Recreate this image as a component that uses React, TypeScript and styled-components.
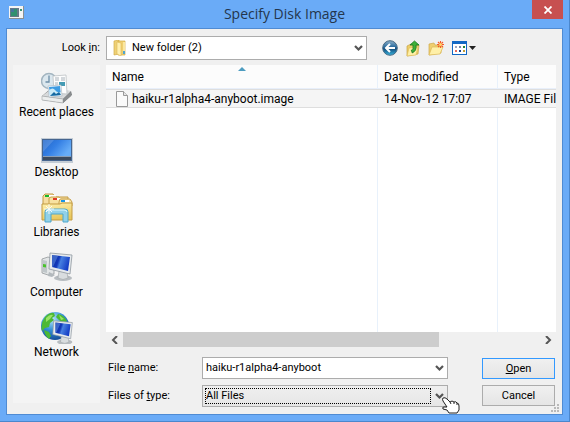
import React from "react";
import styled, { createGlobalStyle } from "styled-components";

const GlobalStyle = createGlobalStyle`
  * { box-sizing: border-box; }
  body { margin: 0; background: #6aabf7; }
  button, input, select { font: inherit; color: inherit; }
`;

const Window = styled.div`
  display: flex;
  flex-direction: column;
  height: 100vh;
  min-height: 380px;
  padding: 0 6px 6px;
  border: solid #4b87cd;
  border-width: 0 1px 1px 0;
  background: #6aabf7;
  color: #000;
  font: 12px/16px Roboto, "Open Sans", sans-serif;
`;

const TitleBar = styled.header`
  display: grid;
  grid-template-columns: 31px 1fr 31px;
  height: 28px;
  flex: none;
`;

const AppIcon = styled.svg`
  margin: 6px 0 0 3px;
`;

const Title = styled.h1`
  margin: 0;
  color: #24364c;
  font-family: "Open Sans", sans-serif;
  font-size: 14px;
  font-weight: 400;
  line-height: 28px;
  text-align: center;
`;

const CloseButton = styled.button`
  display: flex;
  align-items: center;
  justify-content: center;
  height: 19px;
  padding: 0;
  border: 0;
  background: #c75050;
`;

const Client = styled.main`
  position: relative;
  flex: 1;
  min-height: 0;
  display: grid;
  grid-template: 24px minmax(0, 1fr) / 87px minmax(0, 1fr);
  gap: 5px 6px;
  padding: 7px 6px;
  border: 1px solid #4f8bd3;
  background: #f0f0f0;
`;

const LookLabel = styled.label`
  align-self: center;
  text-align: right;
  font-size: 11px;
`;

const TopRow = styled.div`
  display: flex;
  align-items: center;
  gap: 15px;
  padding-right: 80px;
`;

const ToolBar = styled.div`
  display: flex;
  align-items: center;
  gap: 7px;
`;

const ToolButton = styled.button`
  display: flex;
  padding: 0;
  border: 0;
  background: none;
`;

const Combo = styled.div<{ $tone?: "plain" | "grey" }>`
  position: relative;
  display: flex;
  align-items: center;
  flex: 1;
  min-width: 0;
  height: ${(p) => (p.$tone ? "22px" : "24px")};
  border: 1px solid #acacac;
  background: ${(p) => (p.$tone === "grey" ? "linear-gradient(#efefef, #e6e6e6)" : "#fff")};
  font-size: 11px;
`;

const ComboIcon = styled.svg`
  flex: none;
  margin: 0 4px 0 5px;
`;

const ComboSelect = styled.select<{ $focused?: boolean }>`
  appearance: none;
  flex: 1;
  min-width: 0;
  height: 16px;
  margin: 0 1px 0 ${(p) => (p.$focused ? "2px" : "0")};
  padding: 0;
  border: ${(p) => (p.$focused ? "1px dotted #000" : "0")};
  border-radius: 0;
  background: none;
  line-height: 14px;
  outline: 0;
`;

const ComboInput = styled.input`
  flex: 1;
  min-width: 0;
  padding: 0 0 0 3px;
  border: 0;
  background: none;
  outline: 0;
`;

const ComboArrow = styled.span`
  display: flex;
  justify-content: center;
  flex: none;
  width: 15px;
`;

const Pointer = styled.svg`
  position: absolute;
  right: -13px;
  top: 11px;
  z-index: 1;
  pointer-events: none;
`;

const Places = styled.nav`
  display: flex;
  flex-direction: column;
  gap: 12px;
  margin-bottom: 4px;
  padding-top: 7px;
  background: #f4f4f4;
`;

const Place = styled.a`
  display: flex;
  flex-direction: column;
  align-items: center;
  color: #000;
  text-decoration: none;
  white-space: nowrap;
`;

const Content = styled.div`
  display: flex;
  flex-direction: column;
  min-height: 0;
`;

const FileList = styled.div`
  flex: 1;
  min-height: 0;
  overflow: hidden;
  background: #fff;
`;

const Table = styled.table`
  width: 100%;
  height: 100%;
  table-layout: fixed;
  border-collapse: separate;
  border-spacing: 0;
`;

const Head = styled.th`
  position: relative;
  height: 24px;
  padding: 0 6px;
  border-right: 1px solid #e8f1fb;
  border-bottom: 1px solid #e8effa;
  background: #fcfcfc;
  font-weight: 400;
  text-align: left;
  &:last-child { border-right: 0; }
`;

const SortMark = styled.svg`
  position: absolute;
  top: 1px;
  right: 131px;
`;

const Cell = styled.td`
  height: 19px;
  padding: 0 0 0 6px;
  border: solid #dedede;
  border-width: 1px 0;
  background: #f5f5f5;
  overflow: hidden;
  white-space: nowrap;
`;

const FileName = styled.span`
  display: flex;
  align-items: center;
  gap: 2px;
  height: 17px;
  margin-left: 1px;
`;

const Blank = styled.td`
  padding: 0;
  border-right: 1px solid #e8f1fb;
  &:last-child { border-right: 0; }
`;

const ScrollBar = styled.div`
  display: flex;
  height: 15px;
  flex: none;
`;

const ScrollButton = styled.button`
  display: flex;
  align-items: center;
  justify-content: center;
  width: 17px;
  padding: 0;
  border: 0;
  background: none;
`;

const Track = styled.div`
  flex: 1;
`;

const Thumb = styled.div`
  width: 76%;
  height: 100%;
  background: #cdcdcd;
`;

const Fields = styled.form`
  display: grid;
  grid-template-columns: 96px minmax(0, 1fr) 73px;
  row-gap: 6px;
  padding: 10px 1px 0 0;
`;

const FieldLabel = styled.label`
  align-self: center;
  padding-left: 2px;
  font-size: 11px;
`;

const FieldBox = styled.div`
  display: flex;
  padding-right: 34px;
`;

const Button = styled.button<{ $primary?: boolean }>`
  align-self: ${(p) => (p.$primary ? "end" : "start")};
  height: 21px;
  padding: 0;
  border: 1px solid ${(p) => (p.$primary ? "#3399ff" : "#acacac")};
  background: linear-gradient(#f0f0f0, #e5e5e5);
  font-size: 11px;
  line-height: 18px;
`;

const Grip = styled.svg`
  position: absolute;
  right: 2px;
  bottom: 1px;
`;

const Chevron = () => (
  <svg width="9" height="7" viewBox="0 0 9 7" aria-hidden="true">
    <path d="M1 1l3.500 3.500L8 1" fill="none" stroke="#555" strokeWidth="2.200" />
  </svg>
);

const SideArrow = ({ d }: { d: string }) => (
  <svg width="8" height="8" viewBox="0 0 8 8" aria-hidden="true">
    <path d={d} fill="none" stroke="#555" strokeWidth="2" />
  </svg>
);

const RecentIcon = () => (
  <svg width="32" height="32" viewBox="0 0 32 32" aria-hidden="true">
    <circle cx="8" cy="9" r="7.500" fill="#dbe7ee" stroke="#a3b5c0" strokeWidth="1.500" />
    <path d="M8 3.500V10H4.500" fill="none" stroke="#6e8fa8" strokeWidth="1.300" />
    <path d="M1 24L8 18l22 1 1 4-9 8L1 28z" fill="#777b7d" />
    <path d="M1 24L9 18l21 1-8 8z" fill="#d8dadb" />
    <path d="M1 24l21 3v4L1 28z" fill="#eceeee" stroke="#a1a4a6" strokeWidth=".600" />
    <path d="M22 27l8-7v4l-8 7z" fill="#898c8e" />
    <path d="M12 4l13-1 1 19-13-1z" fill="#fdfdfd" stroke="#b4babd" strokeWidth=".700" />
    <path d="M14 6h4M14 8h4M20 6h4M20 8h4M14 11h3M14 13h3" stroke="#a9b2ba" />
    <path d="M18 10h6v4h-6z" fill="#459bb4" />
    <path d="M7 14l13-1 1 11-13 1z" fill="#fff" stroke="#adbac4" strokeWidth=".700" />
    <path d="M8 15l11-1 1 9-11 1z" fill="#3e9ce2" />
    <path d="M8 18q4-3 6 0t6 2v3l-11 1z" fill="#cbeaf7" />
    <path d="M9 24l4-4 2 2 3-2 2 3z" fill="#176aa2" />
  </svg>
);

const DesktopIcon = () => (
  <svg width="32" height="32" viewBox="0 0 32 32" aria-hidden="true">
    <defs>
      <linearGradient id="desk" x2="1" y2=".500">
        <stop offset="0" stopColor="#2166c9" />
        <stop offset=".500" stopColor="#347fe4" />
        <stop offset="1" stopColor="#67adf7" />
      </linearGradient>
    </defs>
    <path d="M0 6h32v25H0z" fill="#c3ccd5" />
    <path d="M1 7h30v22H1z" fill="#46658f" />
    <path d="M2 8h28v16H2z" fill="url(#desk)" />
    <path d="M2 8h11L2 20z" fill="#fff" opacity=".160" />
    <path d="M2 24h28v4H2z" fill="#3c4b5e" />
    <path d="M2 24h28v1H2z" fill="#8b9eb4" />
  </svg>
);

const LibrariesIcon = () => (
  <svg width="32" height="32" viewBox="0 0 32 32" aria-hidden="true">
    <defs>
      <linearGradient id="lib" x2=".300" y2="1">
        <stop offset="0" stopColor="#fff2b1" />
        <stop offset="1" stopColor="#e8c75c" />
      </linearGradient>
    </defs>
    <path d="M2 27V4l2-2h8l2 3h13v22z" fill="#f6dda0" stroke="#c39b43" />
    <path d="M4 3h7v2H4z" fill="#16b728" />
    <path d="M8 3h7v2H8z" fill="#fff" />
    <path d="M8 10V6l2-1h8l2 3h9v18H8z" fill="#f8e2a0" stroke="#c7a04c" />
    <path d="M12 6h4v2h-4z" fill="#df3827" />
    <path d="M16 6h4v2h-4z" fill="#fff" />
    <path d="M18 10l1-3h10l2 3v4H18z" fill="#f8e6aa" stroke="#c7a04c" />
    <path d="M20 8h4v2h-4z" fill="#1695e7" />
    <path d="M24 8h4v2h-4z" fill="#fff" />
    <path d="M1 12h18l2-1h10v17H1z" fill="url(#lib)" stroke="#c39b43" />
    <path d="M4 30V20q0-3 3-3h17q3 0 3 3v10h-5v-8H10v8z" fill="#91d1e8" stroke="#4fa6ca" />
    <path d="M5 20q0-2 2-2h16q3 0 3 2" fill="none" stroke="#ddf8ff" />
    <path d="M8 12v10M3 17h10M5 14l6 6M11 14l-6 6" stroke="#fff" opacity=".850" />
  </svg>
);

const Monitor = ({ id }: { id: string }) => (
  <g>
    <defs>
      <linearGradient id={id} x2="1" y2=".300">
        <stop offset="0" stopColor="#0c2f9e" />
        <stop offset=".420" stopColor="#1238ba" />
        <stop offset=".550" stopColor="#467fe0" />
        <stop offset="1" stopColor="#163fc6" />
      </linearGradient>
    </defs>
    <ellipse cx="22" cy="26" rx="9" ry="3" fill="#b7bcc0" />
    <path d="M18 19l8 1 1 6q-5 3-10 0z" fill="#d9dddf" stroke="#9da2a5" strokeWidth=".600" />
    <path d="M9 1l22 2-2 19L8 17z" fill="#e6eaed" stroke="#8f989f" strokeWidth=".800" />
    <path d="M11 3l18 2-2 14-16-4z" fill={`url(#${id})`} />
    <path d="M11 3l6 1-5 11h-1z" fill="#74a5ed" opacity=".450" />
  </g>
);

const ComputerIcon = () => (
  <svg width="32" height="32" viewBox="0 0 32 32" aria-hidden="true">
    <path d="M1 7l6-2 6 2v15l-6 1-6-2z" fill="#e2e5e6" stroke="#93989b" strokeWidth=".800" />
    <path d="M2 8l4 1v12l-4-1z" fill="#bfc6c9" />
    <path d="M2 12l3 .500v3L2 15z" fill="#49c32b" />
    <path d="M8 20l6 3-3 2-4-1z" fill="#b2b8bc" />
    <Monitor id="computer" />
  </svg>
);

const NetworkIcon = () => (
  <svg width="32" height="32" viewBox="0 0 32 32" aria-hidden="true">
    <defs>
      <radialGradient id="globe" cx=".400" cy=".250" r=".800">
        <stop offset="0" stopColor="#b8e6fa" />
        <stop offset=".500" stopColor="#338fd5" />
        <stop offset="1" stopColor="#124591" />
      </radialGradient>
    </defs>
    <circle cx="14" cy="14" r="14" fill="url(#globe)" />
    <path d="M4 5q5-5 9-4l1 3-3 2 2 2-4 3-1 4-4 1-3 3q-2-7 3-14zM3 18l5 2 2 4-2 3q-4-3-5-9zM17 2q6 1 9 7l-4 2-4-3-3-3z" fill="#4cb934" />
    <path d="M5 6q4-4 7-3l-3 4-4 3zM18 3l5 4-3 1z" fill="#9be367" />
    <g transform="translate(5 8) scale(.85)"><Monitor id="network" /></g>
  </svg>
);

const FolderIcon = () => (
  <ComboIcon width="16" height="16" viewBox="0 0 16 16" aria-hidden="true">
    <path d="M2 1l5-1v14l-5 1z" fill="#eed176" stroke="#d3ac48" strokeWidth=".700" />
    <path d="M6 1h7v14H6z" fill="#efcf70" stroke="#d3ac48" strokeWidth=".700" />
    <path d="M5 2l4 1v13l-4-2z" fill="#fff0b0" stroke="#ddb957" strokeWidth=".600" />
    <path d="M11 2h2v10h-2z" fill="#fbe79f" />
    <path d="M11 11h2v3h-2z" fill="#50a5cf" />
  </ComboIcon>
);

const BackIcon = () => (
  <svg width="16" height="16" viewBox="0 0 16 16" aria-hidden="true">
    <defs>
      <linearGradient id="back" x2="0" y2="1">
        <stop offset="0" stopColor="#8eb1ca" />
        <stop offset=".450" stopColor="#24679c" />
        <stop offset=".550" stopColor="#124b7b" />
        <stop offset="1" stopColor="#39b7e1" />
      </linearGradient>
    </defs>
    <circle cx="8" cy="8" r="7.300" fill="url(#back)" stroke="#496b85" />
    <path d="M13 8H5M8 4L4 8l4 4" fill="none" stroke="#fff" strokeWidth="2" />
  </svg>
);

const UpIcon = () => (
  <svg width="16" height="17" viewBox="0 0 16 17" aria-hidden="true">
    <path d="M2 6l4-2 2 1h6l-1 9-11 2z" fill="#edcd68" stroke="#c5a448" strokeWidth=".700" />
    <path d="M4 8l9-1-2 8-9 1z" fill="#fff0a6" stroke="#dbb954" strokeWidth=".600" />
    <path d="M7 13q5-2 4-8h3L9.500 1 5 5h3q1 4-2 6 2 0 1 2z" fill="#3daf37" stroke="#15781f" strokeWidth=".800" />
  </svg>
);

const NewFolderIcon = () => (
  <svg width="17" height="16" viewBox="0 0 17 16" aria-hidden="true">
    <path d="M1 4l5-1 1 2h6v8L1 15z" fill="#efce6f" stroke="#cfaa4c" strokeWidth=".700" />
    <path d="M4 7h11l-3 7-11 1z" fill="#fff0a8" stroke="#ddb957" strokeWidth=".700" />
    <path d="M12.500 1v7M9 4.500h7M10 2l5 5M15 2l-5 5" stroke="#f55a27" strokeWidth="1.100" />
    <circle cx="12.500" cy="4.500" r="1.500" fill="#ffd76c" />
  </svg>
);

const ViewIcon = () => (
  <svg width="24" height="15" viewBox="0 0 24 15" aria-hidden="true">
    <path d="M0 0h15v14H0z" fill="#1268c4" />
    <path d="M1 3h13v10H1z" fill="#fff" />
    <path d="M3 5h2v2H3z" fill="#9fa6bd" /><path d="M7 5h2v2H7z" fill="#7284a8" /><path d="M11 5h2v2h-2z" fill="#238333" />
    <path d="M3 9h2v2H3z" fill="#e76b5c" /><path d="M7 9h2v2H7z" fill="#164495" /><path d="M11 9h2v2h-2z" fill="#c29b35" />
    <path d="M17 5h7l-3.500 4z" fill="#222" />
  </svg>
);

const places = [
  { name: "Recent places", icon: <RecentIcon /> },
  { name: "Desktop", icon: <DesktopIcon /> },
  { name: "Libraries", icon: <LibrariesIcon /> },
  { name: "Computer", icon: <ComputerIcon /> },
  { name: "Network", icon: <NetworkIcon /> },
];

export default function App() {
  return (
    <Window>
      <GlobalStyle />
      <TitleBar>
        <AppIcon width="16" height="14" viewBox="0 0 16 14" aria-hidden="true">
          <path d="M0 0h15v13H0z" fill="#8c8f91" />
          <path d="M0 0h14v12H0z" fill="#f5f5f5" />
          <path d="M1 2h9v9H1z" fill="#657987" />
          <path d="M2 3h6v7H2z" fill="#31906f" />
          <path d="M2 3h3v3H2z" fill="#45749c" />
          <path d="M11 3h2v2h-2z" fill="#399477" />
        </AppIcon>
        <Title>Specify Disk Image</Title>
        <CloseButton type="button" aria-label="Close">
          <svg width="8" height="8" viewBox="0 0 8 8" aria-hidden="true">
            <path d="M.500 .500l7 7M7.500 .500l-7 7" stroke="#fff" strokeWidth="1.800" />
          </svg>
        </CloseButton>
      </TitleBar>
      <Client>
        <LookLabel htmlFor="look">Look <u>i</u>n:</LookLabel>
        <TopRow>
          <Combo>
            <FolderIcon />
            <ComboSelect id="look"><option>New folder (2)</option></ComboSelect>
            <ComboArrow><Chevron /></ComboArrow>
          </Combo>
          <ToolBar>
            <ToolButton type="button" aria-label="Back"><BackIcon /></ToolButton>
            <ToolButton type="button" aria-label="Up one level"><UpIcon /></ToolButton>
            <ToolButton type="button" aria-label="New folder"><NewFolderIcon /></ToolButton>
            <ToolButton type="button" aria-label="View"><ViewIcon /></ToolButton>
          </ToolBar>
        </TopRow>
        <Places>
          {places.map((p) => (
            <Place href="#" key={p.name}>{p.icon}{p.name}</Place>
          ))}
        </Places>
        <Content>
          <FileList>
            <Table>
              <colgroup><col width="272" /><col width="120" /><col /></colgroup>
              <thead>
                <tr>
                  <Head>
                    Name
                    <SortMark width="8" height="5" viewBox="0 0 8 5" aria-hidden="true">
                      <path d="M0 5l4-4 4 4z" fill="#4d9cc0" />
                    </SortMark>
                  </Head>
                  <Head>Date modified</Head>
                  <Head>Type</Head>
                </tr>
              </thead>
              <tbody>
                <tr>
                  <Cell>
                    <FileName>
                      <svg width="17" height="16" viewBox="0 0 17 16" aria-hidden="true">
                        <path d="M3.500 .500h7l4 4v11h-11z" fill="#fafafa" stroke="#999" />
                        <path d="M10.500 .500v4h4" fill="#e6e6e6" stroke="#999" />
                      </svg>
                      haiku-r1alpha4-anyboot.image
                    </FileName>
                  </Cell>
                  <Cell>14-Nov-12 17:07</Cell>
                  <Cell>IMAGE File</Cell>
                </tr>
                <tr><Blank /><Blank /><Blank /></tr>
              </tbody>
            </Table>
          </FileList>
          <ScrollBar>
            <ScrollButton type="button" aria-label="Scroll left"><SideArrow d="M6 0L2 4l4 4" /></ScrollButton>
            <Track><Thumb /></Track>
            <ScrollButton type="button" aria-label="Scroll right"><SideArrow d="M2 0l4 4-4 4" /></ScrollButton>
          </ScrollBar>
          <Fields onSubmit={(e) => e.preventDefault()}>
            <FieldLabel htmlFor="file">File <u>n</u>ame:</FieldLabel>
            <FieldBox>
              <Combo $tone="plain">
                <ComboInput id="file" defaultValue="haiku-r1alpha4-anyboot" />
                <ComboArrow><Chevron /></ComboArrow>
              </Combo>
            </FieldBox>
            <Button type="submit" $primary><u>O</u>pen</Button>
            <FieldLabel htmlFor="type">Files of <u>t</u>ype:</FieldLabel>
            <FieldBox>
              <Combo $tone="grey">
                <ComboSelect id="type" $focused><option>All Files</option></ComboSelect>
                <ComboArrow><Chevron /></ComboArrow>
                <Pointer width="18" height="17" viewBox="0 0 18 17" aria-hidden="true">
                  <path d="M1 1q2-1 4 1l3 3q2-2 4 0 2-1 3 1 2 0 2 3v4l-2 3H7l-2-3-4-1q-1-2 1-2h3L1 4Q0 2 1 1z" fill="#fff" stroke="#222" />
                  <path d="M8 5l1 2M12 5l0 2M15 6v2" stroke="#222" />
                </Pointer>
              </Combo>
            </FieldBox>
            <Button type="button">Cancel</Button>
          </Fields>
        </Content>
        <Grip width="9" height="9" viewBox="0 0 9 9" aria-hidden="true">
          <path d="M6 0h2v2H6zM3 3h2v2H3zM6 3h2v2H6zM0 6h2v2H0zM3 6h2v2H3zM6 6h2v2H6z" fill="#b9b9b9" />
        </Grip>
      </Client>
    </Window>
  );
}
